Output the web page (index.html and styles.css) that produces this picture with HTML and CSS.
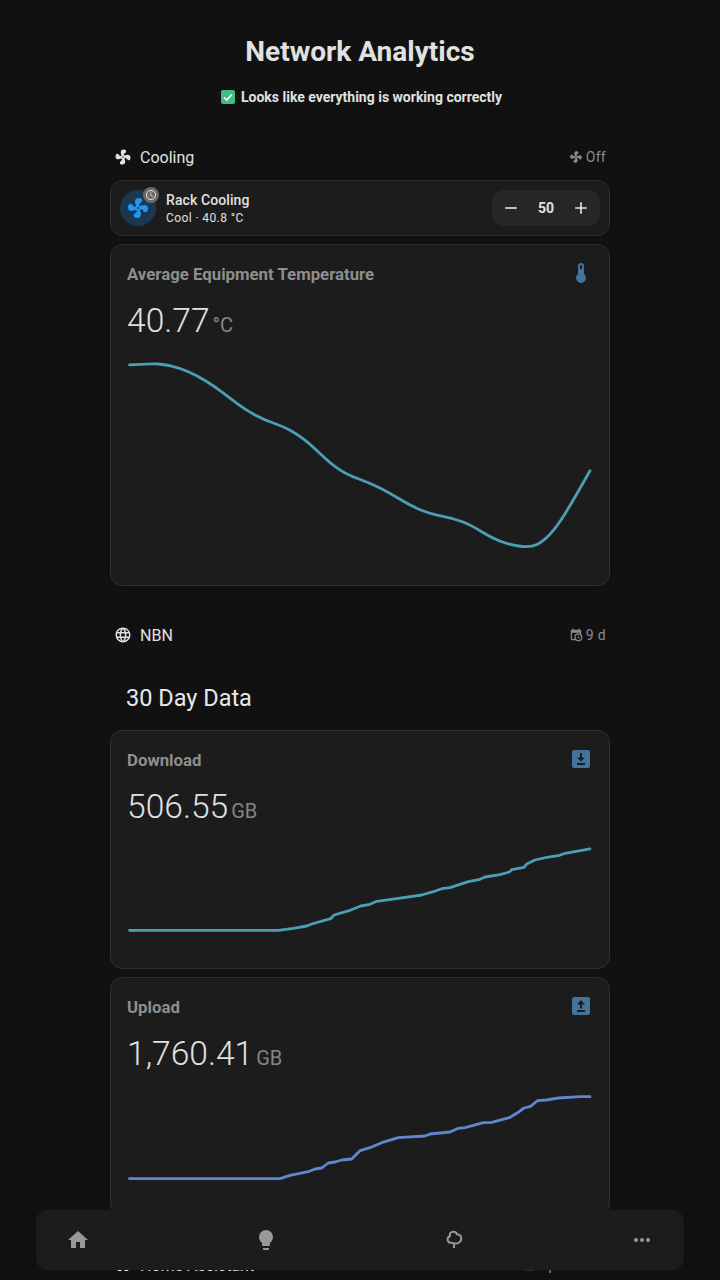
FILE: index.html
```html
<!DOCTYPE html>
<html lang="en">
<head>
<meta charset="utf-8">
<title>Network Analytics</title>
<link rel="stylesheet" href="styles.css">
</head>
<body>
<svg class="defs" aria-hidden="true">
  <symbol id="fan" viewBox="0 0 24 24"><path d="M12,11A1,1 0 0,0 11,12A1,1 0 0,0 12,13A1,1 0 0,0 13,12A1,1 0 0,0 12,11M12.5,2C17,2 17.11,5.57 14.75,6.75C13.76,7.24 13.32,8.29 13.13,9.22C13.61,9.42 14.03,9.73 14.35,10.13C18.05,8.13 22.03,8.92 22.03,12.5C22.03,17 18.46,17.1 17.28,14.73C16.78,13.74 15.72,13.3 14.79,13.11C14.59,13.59 14.28,14 13.88,14.34C15.87,18.03 15.08,22 11.5,22C7,22 6.91,18.42 9.27,17.24C10.25,16.75 10.69,15.71 10.89,14.79C10.4,14.59 9.97,14.27 9.65,13.87C5.96,15.85 2,15.07 2,11.5C2,7 5.56,6.89 6.74,9.26C7.24,10.25 8.29,10.68 9.22,10.87C9.41,10.39 9.73,9.97 10.14,9.65C8.15,5.96 8.94,2 12.5,2Z"/></symbol>
  <symbol id="home" viewBox="0 0 24 24"><path d="M10,20V14H14V20H19V12H22L12,3L2,12H5V20H10Z"/></symbol>
</svg>

<main class="page">
  <h1 class="title">Network Analytics</h1>
  <p class="notice">
    <svg class="check" viewBox="0 0 14 14"><rect width="14" height="14" rx="2"/><path d="M3 7.4l2.7 2.6L11 4.4"/></svg>
    <span>Looks like everything is working correctly</span>
  </p>

  <section class="section">
    <header class="section-head">
      <svg class="section-icon"><use href="#fan"/></svg>
      <span class="section-name">Cooling</span>
      <span class="section-state"><svg class="state-icon"><use href="#fan"/></svg>Off</span>
    </header>
    <div class="stack">
      <div class="card climate">
        <div class="climate-icon">
          <svg class="climate-fan"><use href="#fan"/></svg>
          <span class="badge"><svg viewBox="0 0 24 24"><path d="M12,20A8,8 0 0,0 20,12A8,8 0 0,0 12,4A8,8 0 0,0 4,12A8,8 0 0,0 12,20M12,2A10,10 0 0,1 22,12A10,10 0 0,1 12,22C6.47,22 2,17.5 2,12A10,10 0 0,1 12,2M12.5,7V12.25L17,14.92L16.25,16.15L11,13V7H12.5Z"/></svg></span>
        </div>
        <div class="climate-text">
          <div class="climate-name">Rack Cooling</div>
          <div class="climate-sub">Cool · 40.8 °C</div>
        </div>
        <div class="stepper">
          <svg class="step-btn" viewBox="0 0 24 24"><path d="M19,13H5V11H19V13Z"/></svg>
          <span class="step-val">50</span>
          <svg class="step-btn" viewBox="0 0 24 24"><path d="M19,13H13V19H11V13H5V11H11V5H13V11H19V13Z"/></svg>
        </div>
      </div>

      <div class="card">
        <div class="card-head">
          <div class="card-title-row">
            <span class="card-title">Average Equipment Temperature</span>
            <svg class="card-icon" viewBox="0 0 24 24"><path d="M15 13V5A3 3 0 0 0 9 5V13A5 5 0 1 0 15 13M12 4A1 1 0 0 1 13 5V8H11V5A1 1 0 0 1 12 4Z"/></svg>
          </div>
          <div class="metric"><span class="metric-val">40.77</span><span class="metric-unit">°C</span></div>
        </div>
        <svg class="chart chart-tall" viewBox="111 349.5 498 235">
          <path class="line teal" d="M129.5 364.3L141 363.8Q153 363.3 158 363.5Q163 363.7 171.5 365.7Q180 367.7 188.3 371.3Q196.7 375 205 380Q213.3 385 221.7 391.3Q230 397.7 238.3 403.8Q246.7 410 255 414.5Q263.3 419 273.3 422.5Q283.3 426 290 429.7Q296.7 433.3 303.3 438.3Q310 443.3 320 453Q330 462.7 338.3 468.3Q346.7 474 358.3 478.3Q370 482.7 378.3 486.7Q386.7 490.7 398.3 497.8Q410 505 420 509.2Q430 513.3 441.7 515.7Q453.3 518 461.7 521Q470 524 481.7 531.2Q493.3 538.3 503.3 541.8Q513.3 545.3 522.5 546Q531.7 546.7 537.5 543.7Q543.3 540.7 550 533.7Q556.7 526.7 565 513.3Q573.3 500 590 470.3"/>
        </svg>
      </div>
    </div>
  </section>

  <section class="section">
    <header class="section-head">
      <svg class="section-icon" viewBox="0 0 24 24"><path d="M16.36,14C16.44,13.34 16.5,12.68 16.5,12C16.5,11.32 16.44,10.66 16.36,10H19.74C19.9,10.64 20,11.31 20,12C20,12.69 19.9,13.36 19.74,14M14.59,19.56C15.19,18.45 15.65,17.25 15.97,16H18.92C17.96,17.65 16.43,18.93 14.59,19.56M14.34,14H9.66C9.56,13.34 9.5,12.68 9.5,12C9.5,11.32 9.56,10.65 9.66,10H14.34C14.43,10.65 14.5,11.32 14.5,12C14.5,12.68 14.43,13.34 14.34,14M12,19.96C11.17,18.76 10.5,17.43 10.09,16H13.91C13.5,17.43 12.83,18.76 12,19.96M8,8H5.08C6.03,6.34 7.57,5.06 9.4,4.44C8.8,5.55 8.35,6.75 8,8M5.08,16H8C8.35,17.25 8.8,18.45 9.4,19.56C7.57,18.93 6.03,17.65 5.08,16M4.26,14C4.1,13.36 4,12.69 4,12C4,11.31 4.1,10.64 4.26,10H7.64C7.56,10.66 7.5,11.32 7.5,12C7.5,12.68 7.56,13.34 7.64,14M12,4.03C12.83,5.23 13.5,6.57 13.91,8H10.09C10.5,6.57 11.17,5.23 12,4.03M18.92,8H15.97C15.65,6.75 15.19,5.55 14.59,4.44C16.43,5.07 17.96,6.34 18.92,8M12,2C6.47,2 2,6.5 2,12A10,10 0 0,0 12,22A10,10 0 0,0 22,12A10,10 0 0,0 12,2Z"/></svg>
      <span class="section-name">NBN</span>
      <span class="section-state"><svg class="state-icon" viewBox="0 0 24 24"><path d="M15,13H16.5V15.82L18.94,17.23L18.19,18.53L15,16.69V13M19,8H5V19H9.67C9.24,18.09 9,17.07 9,16A7,7 0 0,1 16,9C17.07,9 18.09,9.24 19,9.67V8M5,21C3.89,21 3,20.1 3,19V5C3,3.89 3.89,3 5,3H6V1H8V3H16V1H18V3H19A2,2 0 0,1 21,5V11.1C22.24,12.36 23,14.09 23,16A7,7 0 0,1 16,23C14.09,23 12.36,22.24 11.1,21H5M16,11.15A4.85,4.85 0 0,0 11.15,16C11.15,18.68 13.32,20.85 16,20.85A4.85,4.85 0 0,0 20.85,16C20.85,13.32 18.68,11.15 16,11.15Z"/></svg>9 d</span>
    </header>
    <h2 class="sub-heading">30 Day Data</h2>
    <div class="stack">
      <div class="card">
        <div class="card-head">
          <div class="card-title-row">
            <span class="card-title">Download</span>
            <svg class="card-icon" viewBox="0 0 24 24"><path fill-rule="evenodd" d="M5 3H19A2 2 0 0 1 21 5V19A2 2 0 0 1 19 21H5A2 2 0 0 1 3 19V5A2 2 0 0 1 5 3ZM11 6V10.5H8L12 14.5L16 10.5H13V6ZM8 16V18H16V16Z"/></svg>
          </div>
          <div class="metric"><span class="metric-val">506.55</span><span class="metric-unit">GB</span></div>
        </div>
        <svg class="chart" viewBox="111 836 498 132">
          <polyline class="line teal" points="129.5,930.3 278.3,930.3 293.3,928.3 306.7,926 311.7,924 330.7,918.7 334,915 350,910.3 360.7,906 370,904.3 376.7,901.3 396.7,898.7 421.7,895 433.3,891.7 441.7,888.7 450,887.7 468.3,881.7 480,879.3 485,877 500,874.7 509.3,872 511.7,869.7 524,867.3 526.7,864 535,860 546.7,857.3 558.3,855.7 565,853.3 590,848.9"/>
        </svg>
      </div>

      <div class="card">
        <div class="card-head">
          <div class="card-title-row">
            <span class="card-title">Upload</span>
            <svg class="card-icon" viewBox="0 0 24 24"><path fill-rule="evenodd" d="M5 3H19A2 2 0 0 1 21 5V19A2 2 0 0 1 19 21H5A2 2 0 0 1 3 19V5A2 2 0 0 1 5 3ZM12 6L8 10.5H11V14.5H13V10.5H16ZM8 16V18H16V16Z"/></svg>
          </div>
          <div class="metric"><span class="metric-val">1,760.41</span><span class="metric-unit">GB</span></div>
        </div>
        <svg class="chart" viewBox="111 1083 498 132">
          <polyline class="line blue" points="129.5,1178.7 280,1178.7 290,1175.3 308.3,1171.7 315,1169 321.7,1168 328.3,1163 335,1162 341.7,1160 351.7,1159 360,1150.7 370,1147.7 381.7,1142.7 398.3,1137.7 425,1136 430,1134 450,1132 458.3,1128.3 465,1127.7 483.3,1122.7 491.7,1122.3 509.3,1117.7 516.7,1113.3 524,1108 530.7,1106.3 537.3,1100.7 546.7,1100 558.3,1098 580,1096.7 590,1096.7"/>
        </svg>
      </div>
    </div>
  </section>

  <section class="section">
    <header class="section-head">
      <svg class="section-icon"><use href="#home"/></svg>
      <span class="section-name">Home Assistant</span>
      <span class="section-state"><svg class="state-icon" viewBox="0 0 24 24"><path d="M4 3H20V21H4Z"/></svg>Up to date</span>
    </header>
  </section>
</main>

<nav class="bottom-nav">
  <a class="nav-item"><svg><use href="#home"/></svg></a>
  <a class="nav-item"><svg viewBox="0 0 24 24"><path d="M12,2A7,7 0 0,0 5,9C5,11.38 6.19,13.47 8,14.74V17A1,1 0 0,0 9,18H15A1,1 0 0,0 16,17V14.74C17.81,13.47 19,11.38 19,9A7,7 0 0,0 12,2M9,21A1,1 0 0,0 10,22H14A1,1 0 0,0 15,21V20H9V21Z"/></svg></a>
  <a class="nav-item"><svg viewBox="0 0 24 24"><path class="tree" d="M12 20V15.5M12 15.5C16 16 19.5 14 19.3 10.5C19.2 8 17 6.5 15 6.3C14.3 4.3 12 3.5 10 4C8 4.4 7.5 6 8 8C6 9 5.2 11 6 13C6.5 14.7 8 15 10 14.8C11 15.2 11.5 15.5 12 15.5Z"/></svg></a>
  <a class="nav-item"><svg viewBox="0 0 24 24"><path d="M16,12A2,2 0 0,1 18,10A2,2 0 0,1 20,12A2,2 0 0,1 18,14A2,2 0 0,1 16,12M10,12A2,2 0 0,1 12,10A2,2 0 0,1 14,12A2,2 0 0,1 12,14A2,2 0 0,1 10,12M4,12A2,2 0 0,1 6,10A2,2 0 0,1 8,12A2,2 0 0,1 6,14A2,2 0 0,1 4,12Z"/></svg></a>
</nav>
</body>
</html>
```

FILE: styles.css
```css
* { box-sizing: border-box; }
html, body { margin: 0; height: 1280px; overflow: hidden; background: #111111; }
body { font-family: Roboto, "Liberation Sans", sans-serif; color: #e1e1e1; }
svg { display: block; fill: currentColor; }
.defs { width: 0; height: 0; position: absolute; }

.page { width: 500px; margin: 0 auto; padding-top: 32px; }
.title { margin: 0; height: 40px; line-height: 40px; font-size: 28px; font-weight: 700; text-align: center; }
.notice { margin: 15px 0 0; height: 20px; padding-left: 3px; display: flex; justify-content: center; align-items: center; gap: 6px; font-size: 14px; line-height: 20px; font-weight: 700; }
.check { width: 14px; height: 14px; }
.check rect { fill: #3fbf7f; }
.check path { fill: none; stroke: #fff; stroke-width: 1.6; }

.section { margin-bottom: 37px; }
.notice + .section { margin-top: 38px; }
.section-head { height: 24px; display: flex; align-items: center; padding: 0 4px; }
.section-icon { width: 18px; height: 18px; color: #e1e1e1; margin-right: 8px; flex: none; }
.section-name { font-size: 16px; color: #e1e1e1; }
.section-state { margin-left: auto; display: flex; align-items: center; gap: 3px; font-size: 14px; letter-spacing: 0.3px; color: #8a8a8a; }
.state-icon { width: 14px; height: 14px; }
.stack { display: flex; flex-direction: column; gap: 8px; margin-top: 11px; }

.card { background: #1c1c1c; border: 1px solid #2e2e2e; border-radius: 12px; }
.climate { height: 56px; padding: 0 9px; display: flex; align-items: center; gap: 10px; }
.climate-icon { width: 36px; height: 36px; border-radius: 50%; background: #1b3850; color: #2196f3; display: flex; align-items: center; justify-content: center; position: relative; flex: none; }
.climate-fan { width: 24px; height: 24px; }
.badge { position: absolute; top: -3px; right: -3px; width: 16px; height: 16px; border-radius: 50%; background: #6a6a6a; color: #e1e1e1; display: flex; align-items: center; justify-content: center; }
.badge svg { width: 12px; height: 12px; }
.climate-text { flex: 1; }
.climate-name { font-size: 14px; line-height: 18px; font-weight: 500; letter-spacing: 0.1px; }
.climate-sub { font-size: 12px; line-height: 16px; margin-top: 1px; letter-spacing: 0.4px; }
.stepper { width: 108px; height: 36px; border-radius: 12px; background: #262626; display: flex; align-items: center; justify-content: space-between; padding: 0 9px; }
.step-btn { width: 20px; height: 20px; color: #e1e1e1; }
.step-val { font-size: 14px; font-weight: 700; }

.card-head { height: 105px; padding: 16px 16px 0; }
.card-title-row { height: 26px; display: flex; justify-content: space-between; align-items: center; }
.card-title { font-size: 16.8px; font-weight: 700; color: #8e8e8e; }
.card-icon { width: 24px; height: 24px; color: #44739e; margin-top: -3px; }
.metric { margin-top: 12px; height: 44px; line-height: 44px; display: flex; align-items: baseline; }
.metric-val { font-size: 33.6px; font-weight: 300; color: #e1e1e1; }
.metric-unit { font-size: 20px; color: #858585; margin-left: 3px; }

.chart { width: 498px; height: 132px; }
.chart-tall { height: 235px; }
.line { fill: none; stroke-width: 2.8; stroke-linecap: round; stroke-linejoin: round; }
.teal { stroke: #4a9fb5; }
.blue { stroke: #5f87d0; }

.sub-heading { margin: 0; height: 83px; padding: 35px 0 0 16px; font-size: 23.5px; line-height: 32px; font-weight: 400; color: #e8e8e8; }
.sub-heading + .stack { margin-top: 0; }

.bottom-nav { position: fixed; left: 36px; right: 36px; bottom: 10px; height: 60px; border-radius: 12px; background: #1c1c1c; display: flex; justify-content: space-between; align-items: center; padding: 0 18px; }
.nav-item { width: 48px; height: 48px; display: flex; align-items: center; justify-content: center; color: #999; }
.nav-item svg { width: 24px; height: 24px; }
.tree { fill: none; stroke: currentColor; stroke-width: 2; }
```
